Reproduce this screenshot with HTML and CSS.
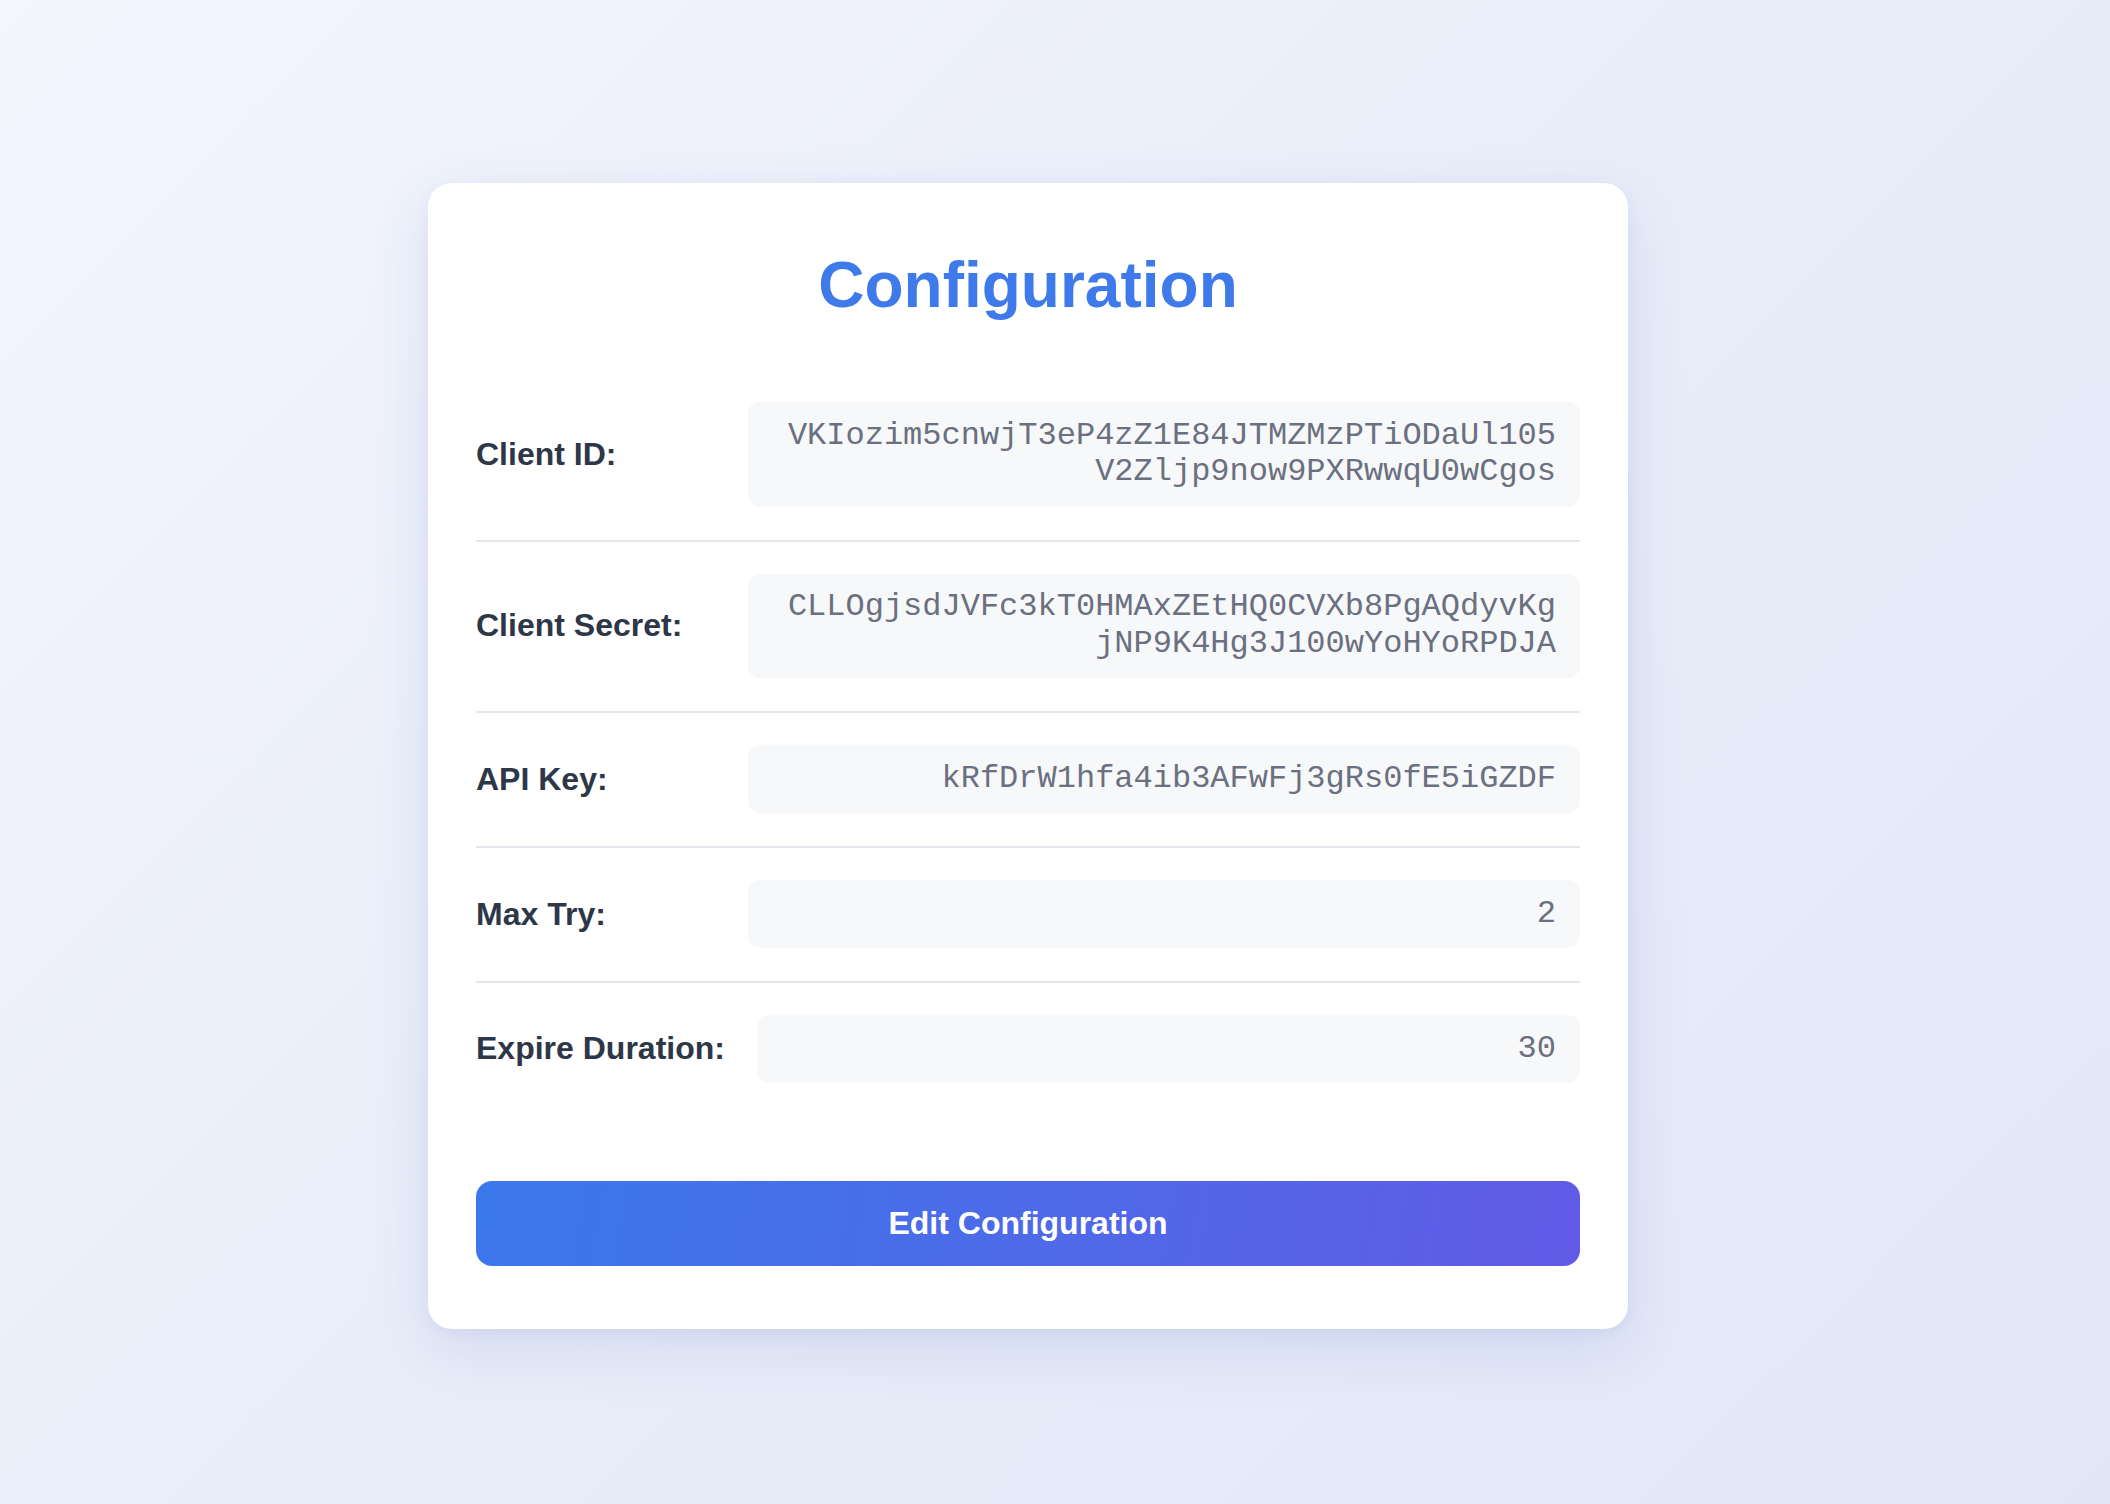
FILE: index.html
```html
<!DOCTYPE html>
<html lang="en">
<head>
<meta charset="utf-8">
<title>Configuration</title>
<link rel="stylesheet" href="styles.css">
</head>
<body>
  <main class="card">
    <h1 class="title">Configuration</h1>
    <div class="rows">
      <div class="row">
        <span class="label">Client ID:</span>
        <span class="value">VKIozim5cnwjT3eP4zZ1E84JTMZMzPTiODaUl105V2Zljp9now9PXRwwqU0wCgos</span>
      </div>
      <div class="row">
        <span class="label">Client Secret:</span>
        <span class="value">CLLOgjsdJVFc3kT0HMAxZEtHQ0CVXb8PgAQdyvKgjNP9K4Hg3J100wYoHYoRPDJA</span>
      </div>
      <div class="row">
        <span class="label">API Key:</span>
        <span class="value">kRfDrW1hfa4ib3AFwFj3gRs0fE5iGZDF</span>
      </div>
      <div class="row">
        <span class="label">Max Try:</span>
        <span class="value">2</span>
      </div>
      <div class="row">
        <span class="label">Expire Duration:</span>
        <span class="value">30</span>
      </div>
    </div>
    <button class="edit-btn" type="button">Edit Configuration</button>
  </main>
</body>
</html>
```
FILE: styles.css
```css
* {
  box-sizing: border-box;
}

html, body {
  margin: 0;
  height: 100%;
}

body {
  min-height: 100vh;
  padding: 8px 54px 0 0;
  display: flex;
  justify-content: center;
  align-items: center;
  background: linear-gradient(135deg, #f3f6fd 0%, #e9edf9 50%, #e2e7f8 100%);
  font-family: "Liberation Sans", Arial, Helvetica, sans-serif;
}

.card {
  width: 1200px;
  background: #ffffff;
  border-radius: 24px;
  padding: 64px 48px 63px;
  box-shadow: 0 20px 60px rgba(60, 80, 170, 0.12), 0 4px 14px rgba(60, 80, 170, 0.05);
  display: flex;
  flex-direction: column;
}

.title {
  margin: 0 0 46px;
  text-align: center;
  font-size: 64px;
  line-height: 1.2;
  font-weight: 700;
  color: #3f7aeb;
}

.rows {
  display: flex;
  flex-direction: column;
}

.row {
  display: flex;
  align-items: center;
  gap: 32px;
  padding: 32px 0 33px;
  border-bottom: 2px solid #e4e6ec;
}

.row:last-child {
  border-bottom: none;
}

.label {
  flex: 0 0 auto;
  min-width: 240px;
  font-size: 32px;
  font-weight: 700;
  color: #2d3748;
  white-space: nowrap;
}

.value {
  flex: 1 1 auto;
  min-width: 0;
  background: #f7f8fa;
  border-radius: 12px;
  padding: 15.6px 24px;
  font-family: "Liberation Mono", "Courier New", monospace;
  font-size: 32px;
  line-height: 36.7px;
  color: #6a7080;
  text-align: right;
  word-break: break-all;
}

.edit-btn {
  margin-top: 65px;
  width: 100%;
  border: none;
  border-radius: 16px;
  padding: 24px;
  background: linear-gradient(100deg, #3b78ec 0%, #4d6ae9 50%, #615ae7 100%);
  color: #ffffff;
  font-family: "Liberation Sans", Arial, Helvetica, sans-serif;
  font-size: 32px;
  font-weight: 700;
  line-height: 36.8px;
  cursor: pointer;
}
```
